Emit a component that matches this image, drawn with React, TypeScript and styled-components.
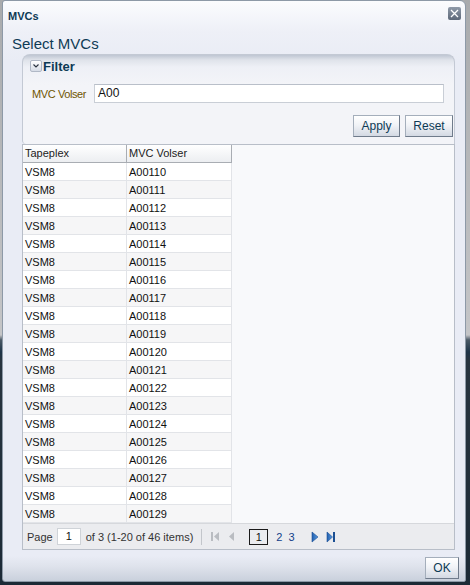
import React from "react";
import styled, { createGlobalStyle } from "styled-components";

const GlobalStyle = createGlobalStyle`
  html, body { margin: 0; padding: 0; }
  body {
    width: 470px;
    height: 585px;
    overflow: hidden;
    font-family: "Liberation Sans", Arial, sans-serif;
    background: linear-gradient(to bottom, #a9abad 0, #c4c5c7 335px, #4a5966 340px, #1e3448 352px, #27343f 360px, #1c2a36 100%);
  }
`;

const Dialog = styled.div`
  box-sizing: border-box;
  width: 464px;
  height: 582px;
  margin-left: 2px;
  border: 1px solid #8d99a7;
  border-radius: 3px 6px 2px 3px;
  background: linear-gradient(to bottom, #fbfcfe 0, #eef0f7 30px, #e9ecf5 60px, #e9ecf5 555px, #dfe3ec 565px, #c9d0dc 100%);
  display: flex;
  flex-direction: column;
`;

const TitleBar = styled.div`
  height: 28px;
  display: flex;
  align-items: center;
  justify-content: space-between;
  padding: 0 4px 0 5px;
`;

const Title = styled.span`
  font-weight: bold;
  font-size: 11px;
  color: #0d3a55;
  margin-top: 2px;
`;

const CloseBtn = styled.div`
  width: 13px;
  height: 13px;
  border-radius: 2px;
  background: linear-gradient(to bottom, #8e99a8, #5d6878);
  display: flex;
  align-items: center;
  justify-content: center;
  margin-top: -2px;
`;

const Heading = styled.h1`
  margin: 6px 0 0 9px;
  height: 20px;
  line-height: 20px;
  font-size: 15px;
  font-weight: normal;
  color: #0f3b55;
`;

const Body = styled.div`
  margin: 0 10px 0 19px;
  display: flex;
  flex-direction: column;
`;

const FilterPanel = styled.div`
  box-sizing: border-box;
  height: 90px;
  border: 1px solid #c3c9d4;
  border-bottom: none;
  border-radius: 8px 8px 0 4px;
  background: linear-gradient(to bottom, #bfc6d3 0, #dfe3ea 5px, #eef0f6 12px, #f3f4f8 30px, #f3f4f8 100%);
  padding: 0 1px 0 7px;
  display: flex;
  flex-direction: column;
`;

const FilterHeader = styled.div`
  height: 22px;
  display: flex;
  align-items: center;
  gap: 1px;
`;

const Toggle = styled.div`
  box-sizing: border-box;
  width: 12px;
  height: 12px;
  border: 1px solid #b0b8c6;
  border-radius: 2px;
  background: linear-gradient(to bottom, #ffffff, #d6dce6);
  display: flex;
  align-items: center;
  justify-content: center;
`;

const FilterTitle = styled.span`
  font-weight: bold;
  font-size: 13px;
  color: #0d3a55;
`;

const FormRow = styled.div`
  margin-top: 7px;
  display: flex;
  align-items: center;
  gap: 8px;
  padding-left: 2px;
  padding-right: 9px;
`;

const Label = styled.span`
  font-size: 11px;
  letter-spacing: -0.4px;
  color: #6f5400;
  white-space: nowrap;
`;

const TextInput = styled.div`
  box-sizing: border-box;
  flex: 1;
  height: 19px;
  border: 1px solid #c9ced6;
  border-top-color: #b9bfc9;
  background: #ffffff;
  font-size: 12px;
  color: #111;
  line-height: 17px;
  padding-left: 3px;
`;

const ButtonRow = styled.div`
  margin-top: 12px;
  display: flex;
  justify-content: flex-end;
  gap: 5px;
`;

const Button = styled.div<{ $w: number }>`
  box-sizing: border-box;
  width: ${(p) => p.$w}px;
  height: 22px;
  border: 1px solid #a4aebb;
  border-right-color: #6f7b8b;
  border-bottom-color: #6f7b8b;
  background: linear-gradient(to bottom, #ffffff 0, #f1f3f7 45%, #d3d9e3 100%);
  display: flex;
  align-items: center;
  justify-content: center;
  font-size: 12px;
  color: #0d3a55;
`;

const TablePanel = styled.div`
  box-sizing: border-box;
  height: 406px;
  border: 1px solid #b8bec8;
  background: #f8f9fb;
  display: flex;
  flex-direction: column;
`;

const Grid = styled.div`
  width: 209px;
  display: grid;
  grid-template-columns: 104px 105px;
  grid-auto-rows: 18px;
  font-size: 11px;
  color: #111;
`;

const HeadCell = styled.div`
  box-sizing: border-box;
  border-right: 1px solid #a9adb3;
  border-bottom: 1px solid #a9adb3;
  background: linear-gradient(to bottom, #ffffff, #eceef1);
  padding-left: 2px;
  line-height: 17px;
  color: #222;
`;

const Cell = styled.div<{ $alt: boolean }>`
  box-sizing: border-box;
  border-right: 1px solid #e2e4e8;
  border-bottom: 1px solid #e2e4e8;
  background: ${(p) => (p.$alt ? "#f6f6f7" : "#ffffff")};
  padding-left: 2px;
  line-height: 18px;
`;

const Spacer = styled.div`
  flex: 1;
`;

const Pager = styled.div`
  box-sizing: border-box;
  height: 26px;
  border-top: 1px solid #d6d8dc;
  background: #ebecef;
  display: flex;
  align-items: center;
  padding-left: 4px;
  font-size: 11px;
  color: #333;
`;

const PageInput = styled.div`
  box-sizing: border-box;
  width: 24px;
  height: 17px;
  margin: 0 5px 0 4px;
  border: 1px solid #cfd3d8;
  background: #fff;
  text-align: center;
  line-height: 15px;
  font-size: 11px;
  color: #111;
`;

const Separator = styled.div`
  width: 1px;
  height: 16px;
  background: #c3c6cb;
  margin: 0 8px 0 8px;
`;

const IconBox = styled.div<{ $ml?: number }>`
  display: flex;
  align-items: center;
  margin-left: ${(p) => p.$ml ?? 0}px;
`;

const CurrentPage = styled.div`
  box-sizing: border-box;
  width: 19px;
  height: 16px;
  margin-left: 14px;
  border: 1px solid #1a1a1a;
  text-align: center;
  line-height: 14px;
  font-size: 11px;
  color: #111;
`;

const PageLink = styled.span<{ $ml: number }>`
  margin-left: ${(p) => p.$ml}px;
  color: #123f8a;
  font-size: 11px;
`;

const DialogFooter = styled.div`
  margin-top: auto;
  height: 31px;
  display: flex;
  justify-content: flex-end;
  align-items: flex-start;
  padding: 7px 6px 0 0;
  box-sizing: border-box;
`;

const rows = Array.from({ length: 20 }, (_, i) => `A00${110 + i}`);

export default function App() {
  return (
    <>
      <GlobalStyle />
      <Dialog>
        <TitleBar>
          <Title>MVCs</Title>
          <CloseBtn>
            <svg width="9" height="9" viewBox="0 0 9 9">
              <path d="M1 1 L8 8 M8 1 L1 8" stroke="#ffffff" strokeWidth="1.3" />
            </svg>
          </CloseBtn>
        </TitleBar>
        <Heading>Select MVCs</Heading>
        <Body>
          <FilterPanel>
            <FilterHeader>
              <Toggle>
                <svg width="8" height="6" viewBox="0 0 8 6">
                  <path d="M1.5 1.5 L4 4 L6.5 1.5" stroke="#2b3340" strokeWidth="1.1" fill="none" />
                </svg>
              </Toggle>
              <FilterTitle>Filter</FilterTitle>
            </FilterHeader>
            <FormRow>
              <Label>MVC Volser</Label>
              <TextInput>A00</TextInput>
            </FormRow>
            <ButtonRow>
              <Button $w={47}>Apply</Button>
              <Button $w={48}>Reset</Button>
            </ButtonRow>
          </FilterPanel>
          <TablePanel>
            <Grid>
              <HeadCell>Tapeplex</HeadCell>
              <HeadCell>MVC Volser</HeadCell>
              {rows.map((v, i) => (
                <React.Fragment key={v}>
                  <Cell $alt={i % 2 === 1}>VSM8</Cell>
                  <Cell $alt={i % 2 === 1}>{v}</Cell>
                </React.Fragment>
              ))}
            </Grid>
            <Spacer />
            <Pager>
              <span>Page</span>
              <PageInput>1</PageInput>
              <span>of 3 (1-20 of 46 items)</span>
              <Separator />
              <IconBox>
                <svg width="10" height="11" viewBox="0 0 10 11">
                  <rect x="1" y="1" width="2" height="9" fill="#b9bcc1" />
                  <path d="M9 1 L4 5.5 L9 10 Z" fill="#b9bcc1" />
                </svg>
              </IconBox>
              <IconBox $ml={7}>
                <svg width="8" height="11" viewBox="0 0 8 11">
                  <path d="M7 1 L2 5.5 L7 10 Z" fill="#b9bcc1" />
                </svg>
              </IconBox>
              <CurrentPage>1</CurrentPage>
              <PageLink $ml={8}>2</PageLink>
              <PageLink $ml={6}>3</PageLink>
              <IconBox $ml={16}>
                <svg width="8" height="12" viewBox="0 0 8 12">
                  <defs>
                    <linearGradient id="nb" x1="0" y1="0" x2="1" y2="0">
                      <stop offset="0" stopColor="#1f5fae" />
                      <stop offset="1" stopColor="#5c9be0" />
                    </linearGradient>
                  </defs>
                  <path d="M1 1 L7 6 L1 11 Z" fill="url(#nb)" stroke="#1b4f93" strokeWidth="0.6" />
                </svg>
              </IconBox>
              <IconBox $ml={7}>
                <svg width="10" height="12" viewBox="0 0 10 12">
                  <path d="M1 1 L6.5 6 L1 11 Z" fill="url(#nb)" stroke="#1b4f93" strokeWidth="0.6" />
                  <rect x="7" y="1" width="2" height="10" fill="#1b4f93" />
                </svg>
              </IconBox>
            </Pager>
          </TablePanel>
        </Body>
        <DialogFooter>
          <Button $w={34}>OK</Button>
        </DialogFooter>
      </Dialog>
    </>
  );
}
